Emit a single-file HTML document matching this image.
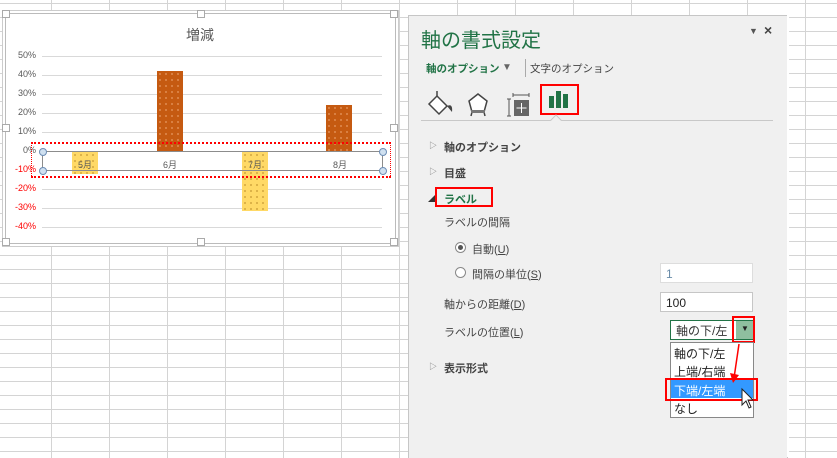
<!DOCTYPE html>
<html><head><meta charset="utf-8"><style>
body{margin:0;width:837px;height:457px;overflow:hidden;position:relative;font-family:"Liberation Sans","Noto Sans CJK JP",sans-serif;
background-color:#fff;
background-image:linear-gradient(to right,#d4d4d4 1px,transparent 1px),linear-gradient(to bottom,#d4d4d4 1px,transparent 1px);
background-size:58px 14px;background-position:51px 3px;}
div{white-space:nowrap}
.a{position:absolute}
.chart{left:5px;top:13px;width:389px;height:229px;background:#fff;border:1px solid #bbb;box-shadow:0 0 0 2px #fff,0 0 0 3px #ccc}
.h{position:absolute;width:6px;height:6px;background:#fff;border:1px solid #aaa}
.gl{position:absolute;left:42px;width:340px;height:1px;background:#d9d9d9}
.yl{position:absolute;left:10px;width:26px;text-align:right;font-size:9px;color:#595959}
.bar{position:absolute;width:26px;background-color:#c55a11;background-image:radial-gradient(#f4b183 0.6px,transparent 0.9px);background-size:6px 6px}
.yb{background-color:#ffd966;background-image:radial-gradient(#b08020 0.6px,transparent 0.9px)}
.ml{position:absolute;font-size:9px;color:#595959;top:158px}
.panel{left:408px;top:15px;width:378px;height:442px;background:#f0f0f0;border-left:1px solid #c6c6c6;border-right:1px solid #c6c6c6;border-top:1px solid #c6c6c6}
.t{position:absolute;font-size:11px;color:#444;white-space:nowrap}
.b{font-weight:bold;color:#444}
.tri{position:absolute;font-size:8px;color:#777}
.inp{position:absolute;background:#fff;border:1px solid #c6c6c6;height:20px;font-size:12px;line-height:20px;padding-left:5px;box-sizing:border-box}
</style></head><body>
<div class="a chart">
 <div class="h" style="left:-4px;top:-4px"></div><div class="h" style="left:191px;top:-4px"></div><div class="h" style="left:384px;top:-4px"></div>
 <div class="h" style="left:-4px;top:110px"></div><div class="h" style="left:384px;top:110px"></div>
 <div class="h" style="left:-4px;top:224px"></div><div class="h" style="left:191px;top:224px"></div><div class="h" style="left:384px;top:224px"></div>
</div>
<div class="a" style="left:0;top:0">
 <div class="a" style="left:186px;top:25px;font-size:14px;color:#595959">増減</div>
 <div class="gl" style="top:56px"></div><div class="gl" style="top:75px"></div><div class="gl" style="top:94px"></div><div class="gl" style="top:113px"></div><div class="gl" style="top:132px"></div>
 <div class="gl" style="top:189px"></div><div class="gl" style="top:208px"></div><div class="gl" style="top:227px"></div>
 <div class="yl" style="top:50px">50%</div><div class="yl" style="top:69px">40%</div><div class="yl" style="top:88px">30%</div><div class="yl" style="top:107px">20%</div><div class="yl" style="top:126px">10%</div><div class="yl" style="top:145px">0%</div>
 <div class="yl" style="top:164px;color:red">-10%</div><div class="yl" style="top:183px;color:red">-20%</div><div class="yl" style="top:202px;color:red">-30%</div><div class="yl" style="top:221px;color:red">-40%</div>
 <div class="bar yb" style="left:72px;top:152px;height:22px"></div>
 <div class="bar" style="left:157px;top:71px;height:80px"></div>
 <div class="bar yb" style="left:242px;top:152px;height:59px"></div>
 <div class="bar" style="left:326px;top:105px;height:46px"></div>
 <div class="a" style="left:42px;top:151px;width:339px;height:18px;border:1px solid #8c8c8c"></div>
 <div class="a" style="left:39px;top:148px;width:6px;height:6px;border-radius:50%;background:#cfe0f0;border:1px solid #6d8db5"></div>
 <div class="a" style="left:379px;top:148px;width:6px;height:6px;border-radius:50%;background:#cfe0f0;border:1px solid #6d8db5"></div>
 <div class="a" style="left:39px;top:167px;width:6px;height:6px;border-radius:50%;background:#cfe0f0;border:1px solid #6d8db5"></div>
 <div class="a" style="left:379px;top:167px;width:6px;height:6px;border-radius:50%;background:#cfe0f0;border:1px solid #6d8db5"></div>
 <div class="ml" style="left:78px">5月</div><div class="ml" style="left:163px">6月</div><div class="ml" style="left:248px">7月</div><div class="ml" style="left:333px">8月</div>
 <div class="a" style="left:31px;top:142px;width:358px;height:32px;border:1px dotted red;border-width:2px 1px"></div>
</div>

<div class="a panel">
 <div class="t" style="left:12px;top:8px;font-size:20px;color:#217346">軸の書式設定</div>
 <div class="t" style="left:340px;top:10px;font-size:9px;color:#555">▼</div>
 <div class="t" style="left:355px;top:6px;font-size:14px;color:#444;font-weight:bold">×</div>
 <div class="t b" style="left:17px;top:45px;color:#217346;font-size:10.5px">軸のオプション</div>
 <div class="t" style="left:93px;top:46px;font-size:10px;color:#666">▼</div>
 <div class="a" style="left:116px;top:43px;width:1px;height:18px;background:#aaa"></div>
 <div class="t" style="left:121px;top:45px;font-size:10.5px">文字のオプション</div>
 <svg class="a" style="left:16px;top:75px" width="150" height="30" viewBox="0 0 150 30">
  <path d="M4 13 L12 5 L22 15 L14 23 Z" fill="#fff" stroke="#444" stroke-width="1.5"/><path d="M12 5 L12 0" stroke="#444" stroke-width="1.5"/><path d="M22 15 Q28 12 27 21 Z" fill="#444"/>
  <path d="M53 3 L62 10 L59 21 L47 21 L44 10 Z" fill="#fff" stroke="#444" stroke-width="1.5"/><path d="M47 21 L46 25 M59 21 L60 25" stroke="#444" stroke-width="1.5"/><rect x="46" y="19" width="14" height="3" fill="#777"/>
  <path d="M84 8 L84 25 M82 8 L86 8 M82 25 L86 25 M88 4 L104 4 M88 2 L88 6 M104 2 L104 6" stroke="#555" stroke-width="1"/>
  <rect x="89" y="9" width="15" height="16" fill="#666"/><path d="M96.5 12 V22 M91.5 17 H101.5" stroke="#fff" stroke-width="1"/>
 </svg>
 <div class="a" style="left:131px;top:68px;width:39px;height:31px;border:2px solid red;box-sizing:border-box"></div>
 <div class="a" style="left:140px;top:80px;width:5px;height:12px;background:#217346"></div>
 <div class="a" style="left:147px;top:75px;width:5px;height:17px;background:#217346"></div>
 <div class="a" style="left:154px;top:78px;width:5px;height:14px;background:#217346"></div>
 <div class="a" style="left:12px;top:104px;width:352px;height:1px;background:#c8c8c8"></div>
 <div class="a" style="left:143px;top:100px;width:7px;height:7px;background:#f0f0f0;border-left:1px solid #c8c8c8;border-top:1px solid #c8c8c8;transform:rotate(45deg)"></div>
 <div class="tri" style="left:20px;top:124px">▷</div><div class="t b" style="left:35px;top:123px">軸のオプション</div>
 <div class="tri" style="left:20px;top:150px">▷</div><div class="t b" style="left:35px;top:149px">目盛</div>
 <div class="tri" style="left:19px;top:177px;color:#333">◢</div>
 <div class="a" style="left:26px;top:171px;width:58px;height:20px;border:2px solid red;box-sizing:border-box"></div>
 <div class="t b" style="left:35px;top:175px;color:#217346">ラベル</div>
 <div class="t" style="left:35px;top:198px">ラベルの間隔</div>
 <div class="a" style="left:46px;top:226px;width:11px;height:11px;border-radius:50%;border:1px solid #888;background:#fff;box-sizing:border-box"></div>
 <div class="a" style="left:49px;top:229px;width:5px;height:5px;border-radius:50%;background:#555"></div>
 <div class="t" style="left:63px;top:225px">自動(<u>U</u>)</div>
 <div class="a" style="left:46px;top:251px;width:11px;height:11px;border-radius:50%;border:1px solid #888;background:#fff;box-sizing:border-box"></div>
 <div class="t" style="left:63px;top:250px">間隔の単位(<u>S</u>)</div>
 <div class="inp" style="left:251px;top:247px;width:93px;color:#6a8ca8;border-color:#ddd">1</div>
 <div class="t" style="left:35px;top:280px">軸からの距離(<u>D</u>)</div>
 <div class="inp" style="left:251px;top:276px;width:93px;color:#222">100</div>
 <div class="t" style="left:35px;top:308px">ラベルの位置(<u>L</u>)</div>
 <div class="inp" style="left:261px;top:304px;width:84px;border-color:#217346;color:#333">軸の下/左</div>
 <div class="a" style="left:327px;top:305px;width:17px;height:18px;background:#8fbf9f"></div>
 <div class="t" style="left:332px;top:308px;font-size:8px;color:#222">▼</div>
 <div class="a" style="left:323px;top:300px;width:23px;height:27px;border:2px solid red;box-sizing:border-box"></div>
 <div class="a" style="left:261px;top:326px;width:84px;height:76px;background:#fff;border:1px solid #888;box-sizing:border-box"></div>
 <div class="t" style="left:265px;top:329px;color:#222;font-size:12px">軸の下/左</div>
 <div class="t" style="left:265px;top:347px;color:#222;font-size:12px">上端/右端</div>
 <div class="a" style="left:262px;top:364px;width:82px;height:18px;background:#3399ff"></div>
 <div class="t" style="left:265px;top:366px;color:#fff;font-size:12px">下端/左端</div>
 <div class="t" style="left:265px;top:384px;color:#222;font-size:12px">なし</div>
 <div class="a" style="left:256px;top:362px;width:93px;height:23px;border:2px solid red;box-sizing:border-box"></div>
 <svg class="a" style="left:320px;top:327px" width="30" height="80"><path d="M10 1 L5 35" stroke="red" stroke-width="1.5"/><path d="M1 30 L4 40 L10 32 Z" fill="red"/><path d="M13 46 L13 62 L17 58 L20 65 L22 64 L19 57 L24 57 Z" fill="#fff" stroke="#222" stroke-width="1"/></svg>
 <div class="tri" style="left:20px;top:345px">▷</div><div class="t b" style="left:35px;top:344px">表示形式</div>
</div>
<div class="a" style="left:787px;top:15px;width:2px;height:442px;background:#fff"></div>
</body></html>
